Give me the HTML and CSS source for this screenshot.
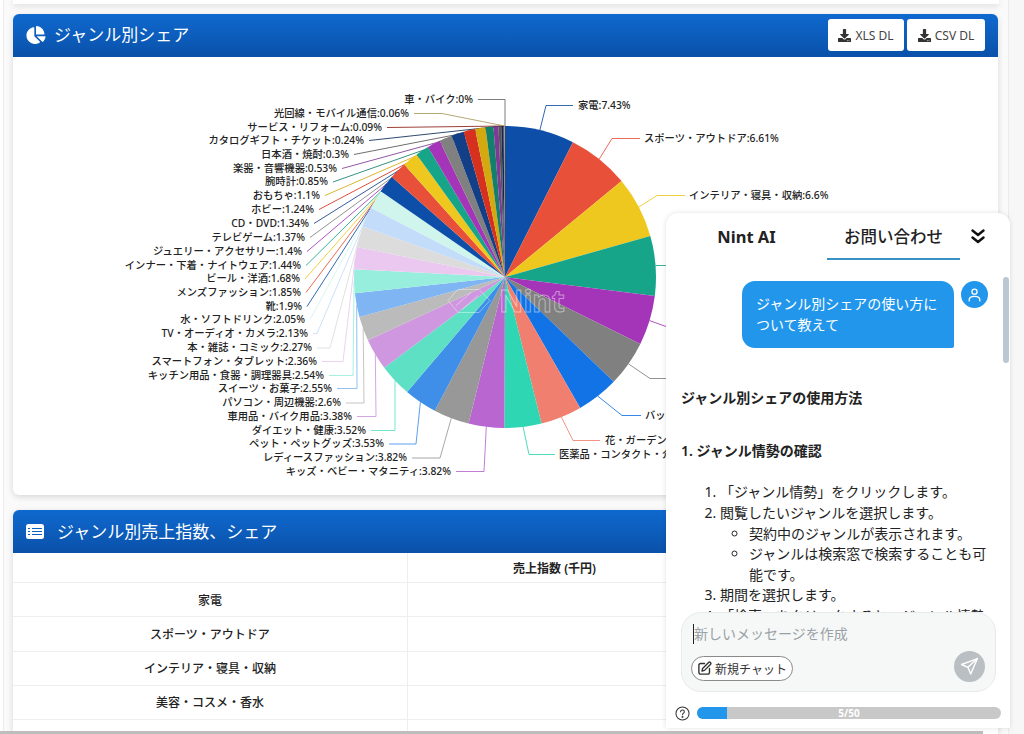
FILE: index.html
```html
<!DOCTYPE html>
<html lang="ja">
<head>
  <meta charset="UTF-8" />
  <title>ジャンル別シェア</title>
  <link rel="stylesheet" href="styles.css">
</head>
<body>
  <div class="app">
    <main class="content">
      <div class="card-stub"></div>

      <section class="card">
        <header class="card-header">
          <svg class="icon-pie" viewBox="0 0 544 512"><path fill="currentColor" d="M527.79 288H290.5l158.03 158.03c6.04 6.04 15.98 6.53 22.19.68 38.7-36.46 65.32-85.61 73.13-140.86 1.34-9.46-6.51-17.85-16.06-17.85zm-15.83-64.8C503.72 103.74 408.26 8.28 288.8.04 279.68-.59 272 7.1 272 16.24V240h223.77c9.14 0 16.82-7.68 16.19-16.8zM224 288V50.71c0-9.55-8.39-17.4-17.84-16.06C86.99 51.49-4.1 155.6.14 280.37 4.5 408.51 114.83 513.59 243.03 511.98c50.4-.63 96.97-16.87 135.26-44.03 7.9-5.6 8.42-17.23 1.57-24.08L224 288z"/></svg>
          <h2>ジャンル別シェア</h2>
          <div class="dl-buttons">
            <button class="dl-btn">
              <svg class="icon-dl" viewBox="0 0 512 512"><path fill="currentColor" d="M216 0h80c13.3 0 24 10.7 24 24v168h87.7c17.8 0 26.7 21.5 14.1 34.1L269.7 378.3c-7.5 7.5-19.8 7.5-27.3 0L90.1 226.1c-12.6-12.6-3.7-34.1 14.1-34.1H192V24c0-13.3 10.7-24 24-24zm296 376v112c0 13.3-10.7 24-24 24H24c-13.3 0-24-10.7-24-24V376c0-13.3 10.7-24 24-24h146.7l49 49c20.1 20.1 52.5 20.1 72.6 0l49-49H488c13.3 0 24 10.7 24 24zm-124 88c0-11-9-20-20-20s-20 9-20 20 9 20 20 20 20-9 20-20zm64 0c0-11-9-20-20-20s-20 9-20 20 9 20 20 20 20-9 20-20z"/></svg>
              XLS DL
            </button>
            <button class="dl-btn dl-btn-csv">
              <svg class="icon-dl" viewBox="0 0 512 512"><path fill="currentColor" d="M216 0h80c13.3 0 24 10.7 24 24v168h87.7c17.8 0 26.7 21.5 14.1 34.1L269.7 378.3c-7.5 7.5-19.8 7.5-27.3 0L90.1 226.1c-12.6-12.6-3.7-34.1 14.1-34.1H192V24c0-13.3 10.7-24 24-24zm296 376v112c0 13.3-10.7 24-24 24H24c-13.3 0-24-10.7-24-24V376c0-13.3 10.7-24 24-24h146.7l49 49c20.1 20.1 52.5 20.1 72.6 0l49-49H488c13.3 0 24 10.7 24 24zm-124 88c0-11-9-20-20-20s-20 9-20 20 9 20 20 20 20-9 20-20zm64 0c0-11-9-20-20-20s-20 9-20 20 9 20 20 20 20-9 20-20z"/></svg>
              CSV DL
            </button>
          </div>
        </header>
        <!-- viewBox uses page coordinates so the label positions read directly -->
        <svg id="pie" class="pie-chart" viewBox="13 56.5 985 438"></svg>
      </section>

      <section class="card card-table">
        <header class="card-header">
          <svg class="icon-table" viewBox="0 0 18 15">
            <rect width="18" height="15" rx="2.5" fill="#fff"/>
            <path d="M2 4.5h2M6 4.5h10M2 7.5h2M6 7.5h10M2 10.5h2M6 10.5h10" stroke="#1060c2" stroke-width="1.2" fill="none"/>
          </svg>
          <h2>ジャンル別売上指数、シェア</h2>
        </header>
        <table class="sales-table">
          <thead>
            <tr><th></th><th>売上指数 (千円)</th></tr>
          </thead>
          <tbody>
            <tr><td>家電</td><td></td></tr>
            <tr><td>スポーツ・アウトドア</td><td></td></tr>
            <tr><td>インテリア・寝具・収納</td><td></td></tr>
            <tr><td>美容・コスメ・香水</td><td></td></tr>
            <tr><td></td><td></td></tr>
          </tbody>
        </table>
      </section>
    </main>
    <div class="scroll-track"></div>
  </div>
  <div class="scroll-bottom"></div>

  <aside class="chat">
    <div class="chat-tabs">
      <div class="chat-tab chat-tab-ai">Nint AI</div>
      <div class="chat-tab chat-tab-active">お問い合わせ</div>
      <svg class="icon-collapse" viewBox="0 0 14 15" fill="none" stroke="#111" stroke-width="2.4" stroke-linecap="round" stroke-linejoin="round">
        <path d="M1.5 1.5 7 6l5.5-4.5M1.5 8.5 7 13l5.5-4.5"/>
      </svg>
    </div>

    <div class="chat-messages">
      <div class="chat-scroll-thumb"></div>
      <div class="msg-user">
        <div class="msg-bubble">ジャンル別シェアの使い方について教えて</div>
        <div class="msg-avatar">
          <svg viewBox="0 0 24 24" width="17" height="17" fill="none" stroke="#fff" stroke-width="1.8" stroke-linecap="round">
            <circle cx="12" cy="8" r="3.6"/>
            <path d="M4.5 21v-1.5c0-3 2.8-5 7.5-5s7.5 2 7.5 5V21"/>
          </svg>
        </div>
      </div>

      <h3 class="answer-title">ジャンル別シェアの使用方法</h3>
      <h3 class="answer-section">1. ジャンル情勢の確認</h3>
      <ol class="answer-list">
        <li>「ジャンル情勢」をクリックします。</li>
        <li>閲覧したいジャンルを選択します。
          <ul>
            <li>契約中のジャンルが表示されます。</li>
            <li>ジャンルは検索窓で検索することも可能です。</li>
          </ul>
        </li>
        <li>期間を選択します。</li>
        <li>「検索」をクリックすると、ジャンル情勢が</li>
      </ol>
    </div>

    <div class="composer">
      <div class="composer-input">新しいメッセージを作成</div>
      <div class="composer-actions">
        <button class="new-chat">
          <svg viewBox="0 0 24 24" width="15" height="15" fill="none" stroke="#333" stroke-width="2.2" stroke-linecap="round" stroke-linejoin="round">
            <path d="M12 4H6a3 3 0 0 0-3 3v11a3 3 0 0 0 3 3h11a3 3 0 0 0 3-3v-6"/>
            <path d="M18.5 2.5a2.1 2.1 0 0 1 3 3L12 15l-4 1 1-4z"/>
          </svg>
          新規チャット
        </button>
        <button class="send-btn">
          <svg viewBox="0 0 24 24" width="19" height="19" fill="none" stroke="#fff" stroke-width="1.8" stroke-linejoin="round" stroke-linecap="round">
            <path d="M22 2 2 9.5l8 3.5 3.5 8.5z"/>
            <path d="M22 2 10 13"/>
          </svg>
        </button>
      </div>
    </div>

    <div class="chat-footer">
      <svg viewBox="0 0 16 16" width="15" height="15" fill="none" stroke="#333" stroke-width="1.1">
        <circle cx="8" cy="8" r="7"/>
        <path d="M6 6.2C6 5 7 4.3 8 4.3s2 .7 2 1.8c0 1.5-2 1.6-2 3.3" stroke-linecap="round"/>
        <circle cx="8" cy="11.6" r=".5" fill="#333"/>
      </svg>
      <div class="usage-bar">
        <div class="usage-fill" style="width: 10%"></div>
        <span class="usage-text">5/50</span>
      </div>
    </div>
  </aside>

  <script src="chart.js"></script>
</body>
</html>
```

FILE: styles.css
```css
body {
  margin: 0;
  background: #fff;
  font-family: "Noto Sans", "Noto Sans CJK JP", sans-serif;
  color: #222;
  height: 734px;
  overflow: hidden;
}

.app {
  display: flex;
  height: 734px;
  padding-left: 3px;
  box-sizing: border-box;
}

.content {
  flex: 1;
  min-width: 0;
  padding: 0 10px;
  background: #fafafa;
  border-left: 1px solid #ececec;
  overflow: hidden;
}

.scroll-track {
  width: 15px;
  background: #f7f7f7;
  border-left: 1px solid #ebebeb;
}

.scroll-bottom {
  position: absolute;
  left: 0;
  bottom: 0;
  width: 983px;
  height: 3px;
  background: #bdbdbd;
}

.card-stub {
  height: 4px;
  margin: 0 -1px 9.5px;
  background: #fff;
  box-shadow: 0 2px 6px rgba(0, 0, 0, 0.14);
}

.card {
  margin: 0 0 15.5px -1px;
  background: #fff;
  border-radius: 6px;
  box-shadow: 0 2px 6px rgba(0, 0, 0, 0.14);
}

.card-table {
  margin-bottom: 0;
}

.card-header {
  display: flex;
  align-items: center;
  height: 43px;
  padding: 0 13px;
  box-sizing: border-box;
  background: linear-gradient(#0f69cf, #0a51a9);
  border-radius: 6px 6px 0 0;
  color: #fff;
}

.card-header h2 {
  margin: 0 0 3px;
  font-size: 17px;
  font-weight: 400;
}

.icon-pie {
  width: 20px;
  height: 18px;
  margin-right: 8px;
}

.icon-table {
  width: 18px;
  height: 15px;
  margin-right: 13px;
}

.dl-buttons {
  display: flex;
  gap: 3px;
  margin-left: auto;
}

.dl-btn {
  display: flex;
  align-items: center;
  justify-content: center;
  gap: 4px;
  height: 32px;
  width: 76px;
  padding: 0;
  background: #fff;
  border: none;
  border-radius: 3px;
  color: #444;
  font-family: inherit;
  font-size: 12px;
}

.dl-btn-csv {
  width: 78px;
}

.icon-dl {
  width: 13px;
  height: 13px;
  color: #333;
}

.pie-chart {
  display: block;
  width: 985px;
  height: 438px;
}

.pie-label {
  font-size: 10.3px;
  font-weight: 500;
  fill: #222;
  dominant-baseline: central;
}

.pie-watermark {
  font-size: 30px;
  font-weight: 700;
  fill: none;
  stroke: rgba(255, 255, 255, 0.45);
  stroke-width: 1;
}

.sales-table {
  width: 688px;
  table-layout: fixed;
  border-collapse: collapse;
  font-size: 12px;
}

.sales-table th,
.sales-table td {
  padding: 0;
  text-align: center;
  border-bottom: 1px solid #eee;
  font-weight: 500;
}

.sales-table th {
  height: 29px;
  font-weight: 600;
}

.sales-table td {
  height: 33.25px;
}

.sales-table th:first-child,
.sales-table td:first-child {
  width: 394px;
  border-right: 1px solid #eee;
}

/* Chat panel */
.chat {
  position: absolute;
  top: 213px;
  left: 666px;
  width: 344px;
  height: 515px;
  display: flex;
  flex-direction: column;
  background: #fff;
  border-radius: 12px 12px 0 0;
  box-shadow: 0 0 5px rgba(0, 0, 0, 0.12);
}

.chat-tabs {
  display: flex;
  align-items: center;
  gap: 14px;
  height: 47px;
  flex: none;
  padding-left: 14px;
}

.chat-tab {
  width: 133px;
  height: 47px;
  line-height: 48px;
  text-align: center;
  box-sizing: border-box;
}

.chat-tab-ai {
  font-size: 16.5px;
  font-weight: 700;
}

.chat-tab-active {
  font-size: 16.5px;
  font-weight: 500;
  border-bottom: 2px solid #3a8fc4;
}

.icon-collapse {
  width: 14px;
  height: 15px;
  margin-left: -3px;
}

.chat-messages {
  position: relative;
  flex: 1;
  min-height: 0;
  overflow: hidden;
  padding: 21px 22px 0 15px;
  font-size: 14px;
  line-height: 20.6px;
}

.chat-scroll-thumb {
  position: absolute;
  top: 17px;
  right: 1px;
  width: 6px;
  height: 86px;
  border-radius: 3px;
  background: #b9c8d2;
}

.msg-user {
  display: flex;
  justify-content: flex-end;
  gap: 7px;
}

.msg-bubble {
  width: 212px;
  box-sizing: border-box;
  padding: 13px 14px;
  background: #2196eb;
  color: #fff;
  border-radius: 13px 13px 2px 13px;
}

.msg-avatar {
  display: flex;
  align-items: center;
  justify-content: center;
  width: 27px;
  height: 27px;
  border-radius: 50%;
  background: #2196eb;
}

.answer-title,
.answer-section {
  margin: 0;
  font-size: 14px;
  font-weight: 600;
}

.answer-title {
  margin-top: 40px;
}

.answer-section {
  margin-top: 32px;
}

.answer-list {
  margin: 21px 0 0;
  padding-left: 39px;
}

.answer-list ul {
  margin: 0;
  padding-left: 29px;
  list-style: circle;
}

.composer {
  flex: none;
  box-sizing: border-box;
  height: 80px;
  margin: 0 14px 0 15px;
  padding: 11px 10px 9px;
  background: #f6f8f8;
  border: 1px solid #e8eaea;
  border-radius: 20px;
  display: flex;
  flex-direction: column;
  justify-content: space-between;
}

.composer-input {
  height: 20px;
  line-height: 20px;
  font-size: 14px;
  color: #9aa1a5;
  border-left: 1px solid #222;
  margin-left: 1px;
  white-space: nowrap;
}

.composer-actions {
  display: flex;
  align-items: center;
  justify-content: space-between;
  height: 31px;
}

.new-chat {
  display: flex;
  align-items: center;
  gap: 3px;
  height: 25px;
  padding: 0 5px;
  margin: 4px 0 0 -1px;
  background: #fff;
  border: 1px solid #8a8a8a;
  border-radius: 13px;
  color: #333;
  font-family: inherit;
  font-size: 12px;
}

.send-btn {
  display: flex;
  align-items: center;
  justify-content: center;
  width: 31px;
  height: 31px;
  padding: 0;
  border: none;
  border-radius: 50%;
  background: #b9bfc3;
}

.chat-footer {
  flex: none;
  display: flex;
  align-items: center;
  gap: 7px;
  height: 36px;
  padding: 6px 9px 0;
  box-sizing: border-box;
}

.usage-bar {
  position: relative;
  flex: none;
  width: 304px;
  height: 12px;
  border-radius: 6px;
  overflow: hidden;
  background: #c8c8c8;
}

.usage-fill {
  height: 100%;
  background: #2196eb;
}

.usage-text {
  position: absolute;
  top: 0;
  left: 0;
  width: 100%;
  text-align: center;
  font-size: 10px;
  font-weight: 700;
  line-height: 12px;
  color: #fff;
}
```

FILE: chart.js
```js
// x = label position, start/elbow = connector points (page coordinates)
const slices = [
  { name: '家電', value: 7.43, color: '#0d4fa8', x: 578, y: 105, start: 573, elbow: 546 },
  { name: 'スポーツ・アウトドア', value: 6.61, color: '#e8503a', x: 644, y: 138, start: 640, elbow: 612 },
  { name: 'インテリア・寝具・収納', value: 6.6, color: '#efc81f', x: 689, y: 195, start: 685, elbow: 657 },
  { value: 6.39, color: '#17a589', y: 265, start: 680, elbow: 656 },
  { value: 5.3, color: '#a435b8', y: 326, start: 680, elbow: 666 },
  { value: 4.9, color: '#808080', y: 378, start: 680, elbow: 650 },
  { name: 'バッグ・小物・ブランド雑貨', value: 4.5, color: '#1273e6', x: 645, y: 415, start: 641, elbow: 622 },
  { name: '花・ガーデン', value: 4.4, color: '#f07f70', x: 605, y: 440, start: 600, elbow: 573 },
  { name: '医薬品・コンタクト・介護', value: 3.96, color: '#2ed6b4', x: 559, y: 454, start: 555, elbow: 529 },
  { name: 'キッズ・ベビー・マタニティ', value: 3.82, color: '#b966d0', x: 451, y: 471, elbow: 484 },
  { name: 'レディースファッション', value: 3.82, color: '#989898', x: 407, y: 457.5, elbow: 440 },
  { name: 'ペット・ペットグッズ', value: 3.53, color: '#3f8fe8', x: 384, y: 443.5, elbow: 416 },
  { name: 'ダイエット・健康', value: 3.52, color: '#5ee0c4', x: 366, y: 430, elbow: 395 },
  { name: '車用品・バイク用品', value: 3.38, color: '#cf97e0', x: 352, y: 416, elbow: 376 },
  { name: 'パソコン・周辺機器', value: 2.6, color: '#bbbbbb', x: 341, y: 402.5, elbow: 364 },
  { name: 'スイーツ・お菓子', value: 2.55, color: '#7fb5f2', x: 332, y: 388, elbow: 357 },
  { name: 'キッチン用品・食器・調理器具', value: 2.54, color: '#97eedd', x: 324, y: 375, elbow: 353 },
  { name: 'スマートフォン・タブレット', value: 2.36, color: '#ebc8f0', x: 317, y: 361, elbow: 343 },
  { name: '本・雑誌・コミック', value: 2.27, color: '#dcdcdc', x: 312, y: 347.5, elbow: 330 },
  { name: 'TV・オーディオ・カメラ', value: 2.13, color: '#c3dcfa', x: 308, y: 333, elbow: 317 },
  { name: '水・ソフトドリンク', value: 2.05, color: '#cff5ec', x: 305, y: 319 },
  { name: '靴', value: 1.9, color: '#0d4fa8', x: 302, y: 306 },
  { name: 'メンズファッション', value: 1.85, color: '#e8503a', x: 301, y: 292 },
  { name: 'ビール・洋酒', value: 1.68, color: '#efc81f', x: 300, y: 278.5 },
  { name: 'インナー・下着・ナイトウェア', value: 1.44, color: '#17a589', x: 301, y: 265 },
  { name: 'ジュエリー・アクセサリー', value: 1.4, color: '#a435b8', x: 302, y: 251 },
  { name: 'テレビゲーム', value: 1.37, color: '#808080', x: 305, y: 237 },
  { name: 'CD・DVD', value: 1.34, color: '#123f86', x: 309, y: 223 },
  { name: 'ホビー', value: 1.24, color: '#d6301f', x: 314, y: 209 },
  { name: 'おもちゃ', value: 1.1, color: '#d4a80f', x: 320, y: 195 },
  { name: '腕時計', value: 0.85, color: '#12806a', x: 328, y: 181.5 },
  { name: '楽器・音響機器', value: 0.53, color: '#7d3a96', x: 337, y: 168 },
  { name: '日本酒・焼酎', value: 0.3, color: '#555555', x: 349, y: 154 },
  { name: 'カタログギフト・チケット', value: 0.24, color: '#0b2a55', x: 364, y: 140 },
  { name: 'サービス・リフォーム', value: 0.09, color: '#8c1f14', x: 382, y: 127 },
  { name: '光回線・モバイル通信', value: 0.06, color: '#a89a5a', x: 409, y: 113, elbow: 442 },
  { name: '車・バイク', value: 0, color: '#666666', x: 473, y: 99, elbow: 505 }
];

const cx = 505;
const cy = 276.5;
const radius = 151;
const svgNS = 'http://www.w3.org/2000/svg';
const pie = document.getElementById('pie');
const total = slices.reduce((sum, s) => sum + s.value, 0);

function add(tag, attrs, text) {
  const el = document.createElementNS(svgNS, tag);
  Object.keys(attrs).forEach(key => el.setAttribute(key, attrs[key]));
  if (text) el.textContent = text;
  pie.appendChild(el);
  return el;
}

function pointAt(turn, r) {
  const angle = turn * Math.PI * 2;
  return [cx + Math.sin(angle) * r, cy - Math.cos(angle) * r];
}

// Connectors go first so the pie sits on top of their ends
let used = 0;
slices.forEach(s => {
  const mid = (used + s.value / 2) / total;
  used += s.value;
  const [px, py] = pointAt(mid, radius);
  const start = s.start !== undefined ? s.start : s.x + 5;
  const elbow = s.elbow !== undefined ? s.elbow : start;
  add('path', {
    d: `M${start} ${s.y}L${elbow} ${s.y}L${px.toFixed(1)} ${py.toFixed(1)}`,
    fill: 'none',
    stroke: s.color,
    'stroke-width': 1,
    opacity: 0.85
  });
});

used = 0;
slices.forEach(s => {
  if (s.value > 0) {
    const [x1, y1] = pointAt(used / total, radius);
    used += s.value;
    const [x2, y2] = pointAt(used / total, radius);
    const large = s.value / total > 0.5 ? 1 : 0;
    add('path', {
      d: `M${cx} ${cy}L${x1.toFixed(2)} ${y1.toFixed(2)}A${radius} ${radius} 0 ${large} 1 ${x2.toFixed(2)} ${y2.toFixed(2)}Z`,
      fill: s.color
    });
  }
  if (s.name) {
    add('text', {
      class: 'pie-label',
      x: s.x,
      y: s.y - 1,
      'text-anchor': s.x < cx ? 'end' : 'start'
    }, `${s.name}:${s.value}%`);
  }
});

// Faint logo over the middle of the pie
add('path', {
  d: 'M458 289h21l11 11-11 12h-21l-10-12zM456 305l15-13M462 309l16-14',
  fill: 'none',
  stroke: 'rgba(255,255,255,0.4)',
  'stroke-width': 1
});
add('text', { class: 'pie-watermark', x: 499, y: 311 }, 'Nint');
```
